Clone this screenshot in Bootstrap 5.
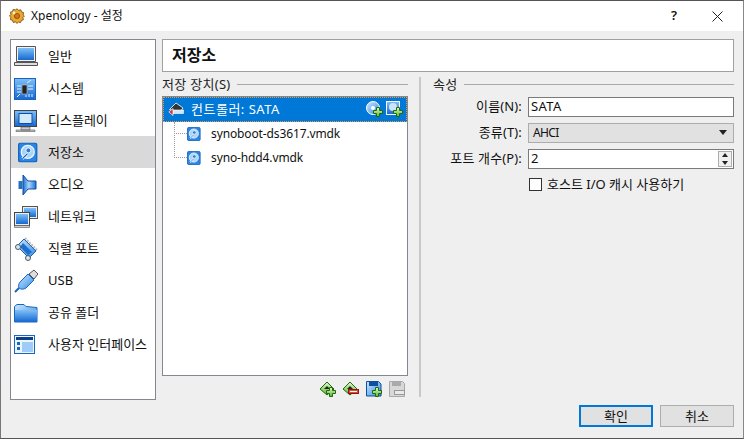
<!DOCTYPE html>
<html lang="ko"><head><meta charset="utf-8"><title>Xpenology - 설정</title>
<link href="https://cdn.jsdelivr.net/npm/bootstrap@5.3.0/dist/css/bootstrap.min.css" rel="stylesheet">
<style>
html,body{margin:0;height:439px;overflow:hidden;background:#efefef}
body,.form-control,.btn{font-family:"Noto Sans","Noto Sans CJK KR",sans-serif;font-size:13px;color:#111}
.win{width:744px;height:439px;border:1px solid #777;border-top-color:#555;border-right-color:#888;background:#efefef;border-bottom:1px solid #555}
.ttl{height:30px;background:#fff;padding:0 0 0 8px;font-size:12px}
.ttl svg{margin-right:6px}
.ttl .tq{width:46px;text-align:center;font-size:13px;font-weight:600}
.ttl .tx{width:46px;display:flex;justify-content:center}
.mainw{padding:8px 9px 0 9px;gap:6px;height:368px}
.side{width:147px;height:361px;background:#fff;border:1px solid #828790;padding-top:0}
.side-it{height:32px;padding-left:3px;padding-top:1px;font-size:13px}
.side-it .ic{width:34px;display:flex;justify-content:flex-start;align-items:center}
.side-it.on{background:#d9d9d9}
.rt{width:572px}
.hdr{height:33px;background:#fff;border:1px solid #a0a0a0;padding-left:9px;font-size:16px;font-weight:700;line-height:1}
.cols{padding-top:2px;height:328px}
.lcol{width:246px}
.grp{height:16px;margin-top:2px;line-height:16px;color:#222;letter-spacing:.3px}
.grp i{flex:1;height:1px;background:#a9a9a9;margin-left:6px;margin-top:1px}
.tree{height:280px;background:#fff;border:1px solid #828790;margin-top:4px}
.rowsel{height:25px;background:#0078d7;color:#fff;outline:1px dotted #e89a3c;outline-offset:-1px;padding-left:4px;padding-right:4px;letter-spacing:.5px}
.rowsel span{margin-left:6px;flex:1}
.kid{height:24px;padding-left:11px;font-size:12px;letter-spacing:-.12px}
.kid .dots{width:13px;height:1px;border-top:1px dotted #999}
.kid span{margin-left:10px}
.treew{position:relative}
.vdots{position:absolute;left:11px;top:25px;width:1px;height:36px;border-left:1px dotted #999}
.tb{gap:7px;justify-content:flex-end;padding:5px 3px 0 0}
.sep{width:2px;height:320px;background:#c8c8c8;margin:3px 12px 0 11px}
.rcol{width:301px}
.frm{display:grid;grid-template-columns:89px 206px;column-gap:6px;row-gap:6px;margin-top:5px;align-items:center}
.frm label{text-align:right;white-space:nowrap;letter-spacing:.15px}
.fld{height:20px;border:1px solid #7a7a7a;background:#fff;padding-left:2px;line-height:17px}
.fsata{letter-spacing:.4px}
.cmb{background:#e1e1e1;border-color:#adadad;padding:0 5px 0 4px;font-size:12px;letter-spacing:-.6px}
.spin{padding-right:1px}
.spbx{width:14px;height:16px;border:1px solid #adadad;background:#f0f0f0;position:relative}
.spbx:before{content:"";position:absolute;left:3px;top:1px;border:3px solid transparent;border-bottom:4px solid #222;border-top:0}
.spbx:after{content:"";position:absolute;left:3px;bottom:1px;border:3px solid transparent;border-top:4px solid #222;border-bottom:0}
.caret{width:0;height:0;border:4px solid transparent;border-top:5px solid #222;border-bottom:0;margin-right:1px}
.cbx{width:13px;height:13px;border:1px solid #333;background:#fff;margin-right:5px;margin-left:1px}
.foot{gap:7px;justify-content:flex-end;padding:6px 9px 0 0}
.wbtn{width:74px;height:22px;border:1px solid #adadad;background:#e1e1e1;text-align:center;line-height:20px;border-radius:0;padding:0}
.wbtn.def{border:2px solid #0078d7;line-height:18px}
</style></head><body>
<svg width="0" height="0" class="position-absolute"><defs>
<linearGradient id="gb" x1="0" y1="0" x2="0" y2="1"><stop offset="0" stop-color="#7ec0f7"/><stop offset="1" stop-color="#1668d0"/></linearGradient>
<linearGradient id="gl" x1="0" y1="0" x2="1" y2="1"><stop offset="0" stop-color="#cfe7fb"/><stop offset="1" stop-color="#2f8be6"/></linearGradient>
<linearGradient id="gs" x1="0" y1="0" x2="1" y2="0"><stop offset="0" stop-color="#1c6fd0"/><stop offset=".45" stop-color="#a9d6fb"/><stop offset="1" stop-color="#1c6fd0"/></linearGradient>
<linearGradient id="gg" x1="0" y1="0" x2="0" y2="1"><stop offset="0" stop-color="#e4f9c8"/><stop offset="1" stop-color="#58b82e"/></linearGradient>
<symbol id="plus" viewBox="0 0 10 10"><path d="M3.500.5h3v3h3v3h-3v3h-3v-3h-3v-3h3z" fill="url(#gg)" stroke="#1f6a10"/></symbol>
<symbol id="hd" viewBox="0 0 16 16"><rect x=".5" y=".5" width="14.500" height="15" rx="1.500" fill="#2a86e2" stroke="#1565c0"/><circle cx="7.800" cy="7.500" r="5.200" fill="#a9d3f8" stroke="#eef7ff"/><circle cx="8.300" cy="6.300" r="2" fill="#2a7ed4" stroke="#fff" stroke-width=".7"/><path d="M3.500 13l4-4" stroke="#fff" stroke-width="2"/><path d="M3.500 13l4-4" stroke="#1565c0" stroke-width=".9"/></symbol>
<symbol id="ctl" viewBox="0 0 16 16"><path d="M1.500 8.500 8 2l7 5-2 2.500H6z" fill="#333" stroke="#fff" stroke-width=".8"/><path d="M5 9h10.500v3.500H5z" fill="#cfe7fb" stroke="#fff" stroke-width=".6"/><path d="M.8 11 5 7.500v7z" fill="#d8342a" stroke="#fff" stroke-width=".7"/></symbol>
</defs></svg>
<div class="win d-flex flex-column">
 <div class="ttl d-flex align-items-center">
  <svg width="16" height="16" viewBox="0 0 16 16"><path d="M8 .8l1.600 1.500 2.200-.5.7 2.100 2.100.7-.5 2.200L15.400 8l-1.500 1.600.5 2.200-2.100.7-.7 2.100-2.200-.5L8 15.400l-1.600-1.500-2.200.5-.7-2.100-2.100-.7.5-2.200L.4 8l1.500-1.600-.5-2.200 2.100-.7.7-2.100 2.200.5z" fill="#f0a52c" stroke="#6b4310" stroke-width=".8"/><circle cx="8" cy="8" r="2.600" fill="#c9781a" stroke="#6b4310" stroke-width=".7"/><circle cx="5" cy="5" r="1.400" fill="#fff1c4"/></svg>
  <span class="flex-grow-1">Xpenology - 설정</span>
  <span class="tq">?</span>
  <span class="tx"><svg width="11" height="11" viewBox="0 0 11 11"><path d="M.5.5l10 10M10.500.5l-10 10" stroke="#222" fill="none"/></svg></span>
 </div>
 <div class="mainw d-flex">
  <div class="side">
   <div class="side-it d-flex align-items-center"><div class="ic"><svg width="24" height="22" viewBox="0 0 24 22"><path d="M2.500.5h19v15h-19z" fill="#f4f4f4" stroke="#555"/><path d="M4 2h16v12H4z" fill="url(#gb)"/><path d="M.5 16.500h23v3H.5z" fill="#ddd" stroke="#555"/></svg></div><span>일반</span></div>
   <div class="side-it d-flex align-items-center"><div class="ic"><svg width="22" height="22" viewBox="0 0 22 22"><rect x=".5" y=".5" width="21" height="21" fill="url(#gb)" stroke="#1a64c0"/><rect x="8" y="7" width="5" height="9" fill="#222" stroke="#ccc" stroke-width=".6"/><path d="M3 8h4M3 11h4M3 14h4M14 8h5M14 11h5M15 19v-3M12 19v-2M18 19v-3M13 5l4-3M3 19l3-3" stroke="#e6f3ff" stroke-width="1"/></svg></div><span>시스템</span></div>
   <div class="side-it d-flex align-items-center"><div class="ic"><svg width="24" height="22" viewBox="0 0 24 22"><rect x=".5" y=".5" width="22" height="16" fill="url(#gb)" stroke="#444"/><rect x="5" y="3.500" width="13" height="10" fill="#d3e9fc" stroke="#0c4ea8"/><path d="M7 17h9v3H7zM2 20h19v1.500H2z" fill="#ccc" stroke="#555" stroke-width=".6"/></svg></div><span>디스플레이</span></div>
   <div class="side-it on d-flex align-items-center"><div class="ic ps-1"><svg width="20" height="21" viewBox="0 0 16 16"><use href="#hd"/></svg></div><span>저장소</span></div>
   <div class="side-it d-flex align-items-center"><div class="ic ps-1"><svg width="20" height="22" viewBox="0 0 20 22"><path d="M5 1l5 6h8v8h-8l-5 6z" fill="url(#gs)" stroke="#0f4f9f"/><rect x=".5" y="7" width="4" height="8" fill="#2670c4"/></svg></div><span>오디오</span></div>
   <div class="side-it d-flex align-items-center"><div class="ic"><svg width="24" height="22" viewBox="0 0 24 22"><rect x="8.500" y=".5" width="15" height="12" fill="#eee" stroke="#555"/><rect x="10" y="2" width="12" height="9" fill="url(#gb)"/><rect x=".5" y="6.500" width="15" height="13" fill="#eee" stroke="#444"/><rect x="2" y="8" width="12" height="10" fill="url(#gb)"/><path d="M.5 19.500h15v2H.5z" fill="#ccc" stroke="#555" stroke-width=".6"/></svg></div><span>네트워크</span></div>
   <div class="side-it d-flex align-items-center"><div class="ic"><svg width="24" height="24" viewBox="0 0 24 24"><path d="M10 2l12 12-7 7L3 9z" fill="url(#gl)" stroke="#1a5fae"/><path d="M11 1l12 12" stroke="#bbb" stroke-dasharray="2 1" stroke-width="2"/><path d="M9 6l9 9-4 3-8-8z" fill="#1c6fd0"/><circle cx="4" cy="10" r="2.500" fill="#cfe6fb" stroke="#555"/><circle cx="14" cy="21" r="2.500" fill="#cfe6fb" stroke="#555"/></svg></div><span>직렬 포트</span></div>
   <div class="side-it d-flex align-items-center"><div class="ic"><svg width="24" height="24" viewBox="0 0 24 24"><path d="M15 5l5-4 4 4-4 5z" fill="#ddd" stroke="#555"/><path d="M14 5l6 6-8 8c-3 2-6 1-7 0-1-3 0-5 2-7z" fill="url(#gl)" stroke="#1666c4"/><path d="M5 19l-4 4" stroke="#1666c4" stroke-width="2"/></svg></div><span>USB</span></div>
   <div class="side-it d-flex align-items-center"><div class="ic"><svg width="24" height="20" viewBox="0 0 24 20"><path d="M.5 6V3.500L3 1.500h7l2 2 11 1v14.500H.5z" fill="url(#gl)" stroke="#1666c4"/><path d="M1 7h22v12H1z" fill="url(#gb)"/></svg></div><span>공유 폴더</span></div>
   <div class="side-it d-flex align-items-center"><div class="ic"><svg width="22" height="20" viewBox="0 0 22 20"><rect x=".5" y=".5" width="20" height="18" fill="#eef6fd" stroke="#1666c4"/><rect x="2" y="2" width="17" height="3" fill="#0c3f8a"/><rect x="8" y="7" width="11" height="10" fill="#9ecbf7"/><rect x="3" y="7" width="3" height="3" fill="#1666c4"/><rect x="3" y="12" width="3" height="3" fill="#1666c4"/></svg></div><span>사용자 인터페이스</span></div>
  </div>
  <div class="rt d-flex flex-column">
   <div class="hdr d-flex align-items-center">저장소</div>
   <div class="cols d-flex">
    <div class="lcol d-flex flex-column">
     <div class="grp d-flex align-items-center">저장 장치(S)<i></i></div>
     <div class="tree treew">
      <div class="vdots"></div>
      <div class="rowsel d-flex align-items-center"><svg width="18" height="16" viewBox="0 0 16 16"><use href="#ctl"/></svg><span>컨트롤러: SATA</span>
       <svg width="17" height="16" viewBox="0 0 17 16" style="margin-right:3px"><circle cx="7" cy="7" r="6.500" fill="url(#gl)" stroke="#fff"/><circle cx="7" cy="7" r="2" fill="#fff"/><use href="#plus" x="7" y="6" width="10" height="10"/></svg>
       <svg width="17" height="16" viewBox="0 0 17 16"><rect x=".5" y=".5" width="13" height="13" fill="url(#gb)" stroke="#fff"/><circle cx="7" cy="6" r="4" fill="#cde5fb"/><use href="#plus" x="7" y="6" width="10" height="10"/></svg>
      </div>
      <div class="kid d-flex align-items-center"><div class="dots"></div><svg width="14" height="16" viewBox="0 0 16 16"><use href="#hd"/></svg><span>synoboot-ds3617.vmdk</span></div>
      <div class="kid d-flex align-items-center"><div class="dots"></div><svg width="14" height="16" viewBox="0 0 16 16"><use href="#hd"/></svg><span>syno-hdd4.vmdk</span></div>
     </div>
     <div class="tb d-flex">
      <svg width="16" height="16" viewBox="0 0 16 16"><path d="M0 8l7-7 7 7-7 6z" fill="url(#gg)" stroke="#1f6a10"/><path d="M4 8l3-3 3 3z" fill="#222"/><use href="#plus" x="6" y="6" width="10" height="10"/></svg>
      <svg width="16" height="16" viewBox="0 0 16 16"><path d="M0 8l7-7 7 7-7 6z" fill="url(#gg)" stroke="#1f6a10"/><path d="M4 8l3-3 3 3z" fill="#222"/><rect x="5.500" y="8.500" width="10" height="4" fill="#e24a38" stroke="#8c1a10"/><rect x="7" y="10" width="7" height="1" fill="#fff"/></svg>
      <svg width="16" height="16" viewBox="0 0 16 16"><path d="M.5.5h12l2.500 2.500v12H.5z" fill="url(#gl)" stroke="#0f4f9f"/><rect x="3" y="1" width="9" height="4" fill="#0f4f9f"/><use href="#plus" x="6" y="6" width="10" height="10"/></svg>
      <svg width="16" height="16" viewBox="0 0 16 16"><path d="M.5.5h13l2 2v13H.5z" fill="#d8d8d8" stroke="#a8a8a8"/><rect x="3" y="1" width="9" height="4" fill="#aaa"/><rect x="5.500" y="9.500" width="10" height="4" fill="#e9e9e9" stroke="#999"/></svg>
     </div>
    </div>
    <div class="sep"></div>
    <div class="rcol">
     <div class="grp d-flex align-items-center">속성<i></i></div>
     <div class="frm">
      <label>이름(N):</label><div class="fld fsata">SATA</div>
      <label>종류(T):</label><div class="fld cmb d-flex align-items-center justify-content-between">AHCI<b class="caret"></b></div>
      <label>포트 개수(P):</label><div class="fld spin d-flex align-items-center justify-content-between">2<b class="spbx"></b></div>
      <div></div><div class="d-flex align-items-center"><div class="cbx"></div>호스트 I/O 캐시 사용하기</div>
     </div>
    </div>
   </div>
  </div>
 </div>
 <div class="foot d-flex">
  <div class="btn wbtn def">확인</div><div class="btn wbtn">취소</div>
 </div>
</div>
</body></html>
